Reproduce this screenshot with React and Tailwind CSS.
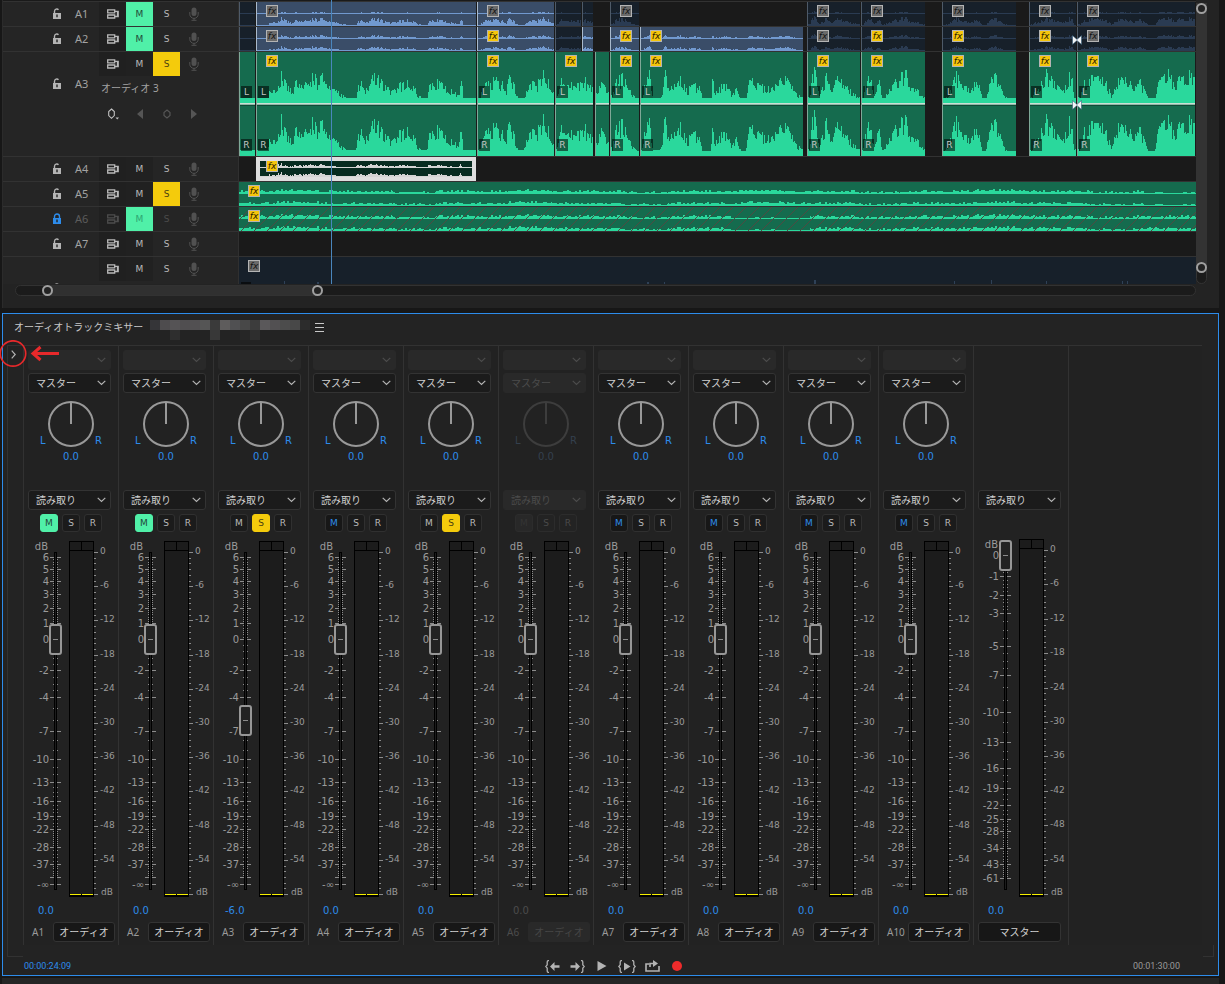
import React from "react";

/* ---------- waveform data ---------- */

const ENVELOPE = [
  [240, 5], [267, 5], [269, 16], [275, 15], [281, 32], [286, 18], [290, 14], [296, 22], [302, 15], [305, 28], [308, 18], [312, 34], [316, 20], [321, 33],
  [325, 20], [335, 12], [345, 5], [355, 5], [357, 23], [364, 14], [371, 28], [378, 26], [385, 14], [392, 14], [400, 19], [410, 23],
  [416, 10], [420, 5], [426, 5], [428, 18], [437, 22], [446, 15], [458, 8], [460, 24], [462, 5], [478, 5], [482, 18], [490, 24],
  [500, 21], [505, 10], [508, 28], [513, 18], [517, 5], [523, 5], [525, 12], [531, 24], [536, 20], [543, 32], [550, 20], [555, 5],
  [557, 8], [560, 24], [567, 22], [575, 18], [583, 24], [590, 16], [596, 12], [602, 24], [608, 12], [611, 6], [615, 24], [622, 26],
  [630, 11], [636, 4], [641, 5], [644, 20], [648, 30], [652, 5], [659, 5], [662, 14], [664, 33], [667, 15], [672, 22], [680, 26],
  [686, 14], [698, 19], [701, 4], [710, 4], [711, 34], [713, 12], [725, 20], [730, 8], [736, 14], [740, 4], [745, 4], [747, 24],
  [758, 19], [766, 14], [775, 21], [785, 24], [790, 16], [800, 6], [804, 4], [808, 6], [810, 22], [814, 42], [818, 8], [822, 18],
  [826, 28], [830, 10], [834, 26], [845, 18], [852, 10], [860, 4], [862, 5], [864, 22], [870, 30], [872, 8], [878, 20], [882, 4],
  [890, 15], [898, 29], [905, 29], [908, 16], [915, 14], [925, 4], [944, 4], [949, 12], [954, 31], [960, 18], [970, 13], [976, 24],
  [981, 4], [985, 4], [988, 22], [992, 30], [1000, 14], [1006, 4], [1029, 4], [1034, 12], [1045, 30], [1052, 22], [1062, 13],
  [1070, 32], [1073, 5], [1078, 6], [1083, 20], [1090, 25], [1105, 24], [1110, 5], [1115, 18], [1119, 33], [1130, 20], [1140, 21],
  [1147, 4], [1154, 4], [1157, 20], [1166, 33], [1172, 22], [1185, 29], [1400, 20],
];

function envelopeAt(x) {
  for (let i = 1; i < ENVELOPE.length; i += 1) {
    const [x1, y1] = ENVELOPE[i];
    if (x <= x1) {
      const [x0, y0] = ENVELOPE[i - 1];
      return y0 + ((y1 - y0) * Math.max(0, x - x0)) / (x1 - x0);
    }
  }
  return 5;
}

function noise(n) {
  const s = Math.sin(n * 127.1 + 11.7) * 43758.5453;
  return s - Math.floor(s);
}

function speechPath(start, width, base, scale, floor, max) {
  let d = "";
  for (let i = 0; i < width; i += 1) {
    const e = envelopeAt(start + i);
    const r = noise(Math.floor((start + i) / 2) + (i % 3 === 0 ? 500 : 0));
    const raw = e <= 6 ? e * scale : e * scale * (0.55 + 0.62 * r);
    const h = Math.min(max, Math.max(floor, Math.round(raw)));
    if (h > 0) d += `M${i} ${base}v${-h}h1v${h}z`;
  }
  return d;
}

function musicPath(width, base, quietFrom, quietTo, low) {
  let d = "";
  for (let i = 0; i < width; i += 1) {
    const quiet = i >= quietFrom && i <= quietTo;
    const swell = 3 + Math.round(Math.sin(i / 37) * 0.6);
    const h = quiet ? 1 + (noise(i >> 2) > 0.8 ? 1 : 0) : swell + Math.floor(noise((i >> 1) + low) * 2.3) - 1;
    d += `M${i} ${base}v${-h}h1v${h}z`;
  }
  return d;
}

/* ---------- clips ---------- */

const CLIPS_A1 = [
  { x: 239, w: 16, dim: true },
  { x: 256, w: 220, fx: "gray" },
  { x: 477, w: 77, fx: "gray" },
  { x: 555, w: 26, dim: true },
  { x: 582, w: 11, dim: true },
  { x: 610, w: 29, dim: true, fx: "gray" },
  { x: 807, w: 53, dim: true, fx: "gray" },
  { x: 861, w: 64, dim: true, fx: "gray" },
  { x: 942, w: 74, dim: true, fx: "gray" },
  { x: 1029, w: 47, dim: true, fx: "gray" },
  { x: 1077, w: 118, dim: true, fx: "gray" },
];

const CLIPS_A2 = [
  { x: 239, w: 16, dim: true },
  { x: 256, w: 220, fx: "gray" },
  { x: 477, w: 77, fx: "yellow" },
  { x: 555, w: 26, dim: true },
  { x: 582, w: 11 },
  { x: 610, w: 29, fx: "yellow" },
  { x: 640, w: 163, fx: "yellow" },
  { x: 807, w: 53, dim: true, fx: "gray" },
  { x: 861, w: 64, dim: true, fx: "yellow" },
  { x: 942, w: 74, dim: true, fx: "yellow" },
  { x: 1029, w: 47, dim: true, fx: "yellow" },
  { x: 1077, w: 118, dim: true, fx: "gray" },
];

const CLIPS_A3 = [
  { x: 239, w: 16, tag: true },
  { x: 256, w: 220, fx: "yellow", tag: true },
  { x: 477, w: 77, fx: "yellow", tag: true },
  { x: 555, w: 38, fx: "yellow", tag: true },
  { x: 595, w: 14 },
  { x: 610, w: 29, fx: "yellow", tag: true },
  { x: 640, w: 163, fx: "yellow", tag: true },
  { x: 807, w: 53, fx: "yellow", tag: true },
  { x: 861, w: 64, fx: "yellow", tag: true },
  { x: 942, w: 74, fx: "yellow", tag: true },
  { x: 1029, w: 47, fx: "yellow", tag: true },
  { x: 1077, w: 118, fx: "yellow", tag: true },
];

const LANE_ORIGIN = 239;

function FxBadge({ tone, className = "left-[9px] top-[3px]" }) {
  const color = tone === "yellow" ? "bg-[#f5c60c] text-[#2a2000]" : "bg-[#6a6a6a] text-[#141414]";
  return (
    <span className={`absolute z-10 flex h-3 w-3 items-center justify-center border border-[#b4b4b4] ${color} ${className}`}>
      <span className="font-['DejaVu_Sans'] text-[9px] leading-none italic">fx</span>
    </span>
  );
}

function ChannelTag({ children, className }) {
  return (
    <span className={`absolute left-px z-10 flex h-3 w-[11px] items-center justify-center bg-black/55 font-['DejaVu_Sans'] text-[9px] leading-none text-[#c4c4c4] ${className}`}>
      {children}
    </span>
  );
}

function Clip({ clip, className, children }) {
  return (
    <div
      className={`absolute top-0 h-full overflow-hidden ${className}`}
      style={{ left: clip.x - LANE_ORIGIN, width: clip.w }}
    >
      {children}
      {clip.fx && <FxBadge tone={clip.fx} />}
    </div>
  );
}

function SmallClip({ clip, upper, lower }) {
  const wave = clip.dim ? "#2a3b52" : "#7199cf";
  return (
    <Clip clip={clip} className={`border-l ${clip.dim ? "border-[#4e5a68] bg-[#17202a]" : "border-[#a9bacd] bg-[#3a4d68]"}`}>
      <svg width={clip.w} height="24" className="block" shapeRendering="crispEdges" aria-hidden="true">
        <path d={speechPath(clip.x, clip.w, 12, upper, 1, 6)} fill={wave} />
        <path d={speechPath(clip.x, clip.w, 24, lower, 1, 10)} fill={wave} />
      </svg>
    </Clip>
  );
}

function TallClip({ clip }) {
  return (
    <Clip clip={clip} className="border-l border-[#7fa897] bg-[#156b4e]">
      <svg width={clip.w} height="104" className="block" shapeRendering="crispEdges" aria-hidden="true">
        <path d={speechPath(clip.x, clip.w, 51, 1, 5, 46)} fill="#2ad89c" />
        <path d={speechPath(clip.x + 0.3, clip.w, 104, 1.25, 5, 46)} fill="#2ad89c" />
        <rect x="0" y="51" width={clip.w} height="1" fill="#c9dfd5" />
        <rect x="0" y="52" width={clip.w} height="1" fill="#8fb5a5" />
        <rect x="0" y="53" width={clip.w} height="1" fill="#0f4a37" />
      </svg>
      {clip.tag && <ChannelTag className="top-[34px]">L</ChannelTag>}
      {clip.tag && <ChannelTag className="top-[87px]">R</ChannelTag>}
    </Clip>
  );
}

function MusicLane({ locked }) {
  const hatch = [];
  for (let x = -24; x < 1600; x += 13) hatch.push(`M${x} 24L${x + 24} 0`);
  return (
    <div className="absolute inset-0 overflow-hidden bg-[#156b4e]">
      <svg width="1600" height="24" className="block" aria-hidden="true">
        <g shapeRendering="crispEdges" fill="#2ad89c">
          <path d={musicPath(1600, 12, locked ? 492 : 905, locked ? 570 : 1600, 3)} />
          <path d={musicPath(1600, 24, locked ? 492 : 905, locked ? 570 : 1600, 90)} />
        </g>
        {locked && <path d={hatch.join("")} stroke="#4f4a42" strokeWidth="1" fill="none" />}
      </svg>
      <FxBadge tone="yellow" />
    </div>
  );
}

function Bowtie({ className }) {
  return (
    <svg viewBox="0 0 10 10" className={`absolute z-20 h-[10px] w-[10px] ${className}`} aria-hidden="true">
      <path d="M0.5 0.500L5 4.500 9.500 0.500v9L5 5.500 0.500 9.500z" fill="#f2f4f6" stroke="#27506f" strokeWidth="0.5" />
    </svg>
  );
}

/* ---------- track header icons ---------- */

function LockIcon({ locked }) {
  return (
    <svg viewBox="0 0 10 12" className={`h-3 w-[10px] ${locked ? "text-[#2d8ceb]" : "text-[#b4b4b4]"}`} aria-hidden="true">
      <path d={locked ? "M2.5 6V3.5a2.5 2.5 0 0 1 5 0V6" : "M2.5 6V3.2a2.3 2.3 0 0 1 4-1.4"} fill="none" stroke="currentColor" strokeWidth="1.4" />
      <path d="M1 5h8v6H1z" fill="currentColor" />
      <path d="M4.3 6.6h1.4v2.6H4.3z" fill="#202020" />
    </svg>
  );
}

function TargetIcon() {
  return (
    <svg viewBox="0 0 12 10" className="h-[10px] w-3" fill="none" stroke="currentColor" strokeWidth="1.3" aria-hidden="true">
      <path d="M0.7 0.8h7v3h-7zM0.7 6h7v3h-7z" />
      <path d="M7.7 2.3h3.5v5.2H7.7M10.5 2.5v5" />
    </svg>
  );
}

function MicIcon() {
  return (
    <svg viewBox="0 0 10 14" className="h-[14px] w-[10px] text-[#515151]" aria-hidden="true">
      <rect x="2.5" y="0.5" width="5" height="8.5" rx="2.5" fill="currentColor" />
      <path d="M0.8 5v2.2a4.2 4.2 0 0 0 8.4 0V5M5 11.2v2M2.5 13.3h5" fill="none" stroke="currentColor" />
    </svg>
  );
}

function TrackButtons({ name, mute, solo, locked }) {
  const idle = locked ? "text-[#4c4c4c]" : "text-[#b9b9b9]";
  return (
    <div className="flex h-6 font-['DejaVu_Sans'] text-[9px] leading-none">
      <button aria-label={`${name} source`} className={`flex w-[27px] items-center justify-center bg-[#202020] ${idle}`}>
        <TargetIcon />
      </button>
      <button
        aria-pressed={mute}
        className={`w-[27px] ${mute ? `bg-[#50f0a8] ${locked ? "text-[#2ea673]" : "text-[#23493a]"}` : `bg-[#212121] ${idle}`}`}
      >
        M
      </button>
      <button
        aria-pressed={solo}
        className={`w-[27px] ${solo ? "bg-[#f4cb0c] text-[#4a4010]" : `bg-[#252525] ${idle}`}`}
      >
        S
      </button>
      <button aria-label={`${name} voice-over`} className="flex w-[27px] items-center justify-center">
        <MicIcon />
      </button>
    </div>
  );
}

function TrackRow({ name, mute = false, solo = false, locked = false, size = "h-[25px]", tall, peek, children }) {
  return (
    <div className={`flex shrink-0 ${size} ${peek ? "" : "border-b border-[#323232]"}`}>
      <div className="flex w-[236px] shrink-0 overflow-hidden border-r border-[#303030] bg-[#252525]">
        <div className={`flex w-24 items-start justify-end ${tall ? "pt-5" : ""}`}>
          <button aria-label={`lock ${name}`} className={`mr-[13px] flex h-6 items-center ${peek ? "mt-5" : ""}`}>
            <LockIcon locked={locked} />
          </button>
          <span className={`flex h-6 w-6 items-center pb-px text-[11px] ${locked ? "text-[#5c5c5c]" : "text-[#a2a2a2]"}`}>{peek ? "" : name}</span>
        </div>
        <div>
          <TrackButtons name={name} mute={mute} solo={solo} locked={locked} />
          {tall && (
            <>
              <p className="flex h-6 items-center pl-[2px] text-[10px] text-[#a2a2a2]">オーディオ 3</p>
              <div className="flex h-7 items-center text-[#555555]">
                <button aria-label="keyframe display" className="flex w-[27px] justify-center text-[#c0c0c0]">
                  <svg viewBox="0 0 12 12" className="h-3 w-3" aria-hidden="true">
                    <path d="M4.5 1L7.3 3.6v4L4.5 10.3 1.7 7.600V3.600z" fill="none" stroke="currentColor" strokeWidth="1.1" />
                    <path d="M8.500 9.500h3.500l-1.750 2z" fill="currentColor" />
                  </svg>
                </button>
                <button aria-label="previous keyframe" className="flex w-[27px] justify-center">
                  <svg viewBox="0 0 8 10" className="h-[10px] w-2" aria-hidden="true"><path d="M7 0v10L1 5z" fill="currentColor" /></svg>
                </button>
                <button aria-label="add keyframe" className="flex w-[27px] justify-center">
                  <svg viewBox="0 0 8 10" className="h-[10px] w-2" aria-hidden="true"><path d="M4 1l3 2.500v3L4 9 1 6.500v-3z" fill="none" stroke="currentColor" strokeWidth="1.200" /></svg>
                </button>
                <button aria-label="next keyframe" className="flex w-[27px] justify-center">
                  <svg viewBox="0 0 8 10" className="h-[10px] w-2" aria-hidden="true"><path d="M1 0v10l6-5z" fill="currentColor" /></svg>
                </button>
              </div>
            </>
          )}
        </div>
      </div>
      <div className="relative min-w-0 flex-1 overflow-hidden bg-[#1a1a1a]">{children}</div>
    </div>
  );
}

function ZoomHandle({ className }) {
  return <button aria-label="zoom handle" className={`absolute h-[11px] w-[11px] rounded-full border-2 border-[#a0a0a0] bg-[#232323] ${className}`} />;
}

function Timeline() {
  const a4 = { x: 256, w: 220 };
  return (
    <section className="mx-[2px] mr-[6px] flex h-[308px] flex-col border-l border-[#2b2b2b] bg-[#232323]">
      <div className="relative flex h-[284px] overflow-hidden">
        <div className="flex min-w-0 flex-1 flex-col overflow-hidden">
          <div className="h-[2px] shrink-0 border-b border-[#323232] bg-[#1a1a1a]" />
          <TrackRow name="A1" mute>
            {CLIPS_A1.map((c) => <SmallClip key={c.x} clip={c} upper={0.07} lower={0.28} />)}
          </TrackRow>
          <TrackRow name="A2" mute>
            {CLIPS_A2.map((c) => <SmallClip key={c.x} clip={c} upper={0.13} lower={0.15} />)}
          </TrackRow>
          <TrackRow name="A3" solo tall size="h-[105px]">
            {CLIPS_A3.map((c) => <TallClip key={c.x} clip={c} />)}
          </TrackRow>
          <TrackRow name="A4">
            <div
              className="absolute top-0 h-6 overflow-hidden border-4 border-[#dedede] bg-[#072b20]"
              style={{ left: a4.x - LANE_ORIGIN, width: a4.w }}
            >
              <svg width="212" height="16" className="block" shapeRendering="crispEdges" aria-hidden="true">
                <path d={speechPath(a4.x + 4, 212, 7, 0.14, 1, 5)} fill="#d4d4d4" />
                <path d={speechPath(a4.x + 4, 212, 16, 0.14, 1, 5)} fill="#d4d4d4" />
              </svg>
              <FxBadge tone="yellow" className="-top-px left-[6px]" />
            </div>
          </TrackRow>
          <TrackRow name="A5" solo><MusicLane /></TrackRow>
          <TrackRow name="A6" mute locked><MusicLane locked /></TrackRow>
          <TrackRow name="A7" />
          <TrackRow name="A8" peek size="h-7">
            <div className="absolute inset-0 bg-[#17202a]">
              <FxBadge tone="gray" />
              <svg width="960" height="27" className="block" shapeRendering="crispEdges" aria-hidden="true">
                <path d="M45 24h1v3h-1zM78 25h2v2h-2zM408 25h2v2h-2zM425 25h1v2h-1zM575 23h2v4h-2zM715 24h1v3h-1zM752 23h1v4h-1zM807 24h1v3h-1zM883 24h1v3h-1zM888 24h1v3h-1z" fill="#2f4157" />
                <path d="M2 25h10v2h-10z" fill="#0a0d10" />
              </svg>
            </div>
          </TrackRow>
          <Bowtie className="left-[1069px] top-[35px]" />
          <Bowtie className="left-[1069px] top-[100px]" />
          <div className="absolute left-[328px] top-0 z-20 h-full w-px bg-[#4a86bd]" />
        </div>
        <div className="relative mr-3 w-[11px] shrink-0">
          <div className="absolute inset-x-0 top-[3px] bottom-0 rounded-full border border-[#343434] bg-[#1b1b1b]" />
          <div className="absolute inset-x-0 top-[3px] h-[264px] bg-[#333333]" />
          <ZoomHandle className="left-0 top-[3px]" />
          <ZoomHandle className="left-0 top-[262px]" />
        </div>
      </div>
      <div className="relative mt-px mr-[23px] ml-3 h-[11px] rounded-full border border-[#323232] bg-[#1b1b1b]">
        <div className="absolute left-8 h-[9px] w-[271px] bg-[#303030]" />
        <ZoomHandle className="-top-px left-[26px]" />
        <ZoomHandle className="-top-px left-[296px]" />
      </div>
    </section>
  );
}

/* ---------- mixer ---------- */

const CHANNEL_SCALE = [
  ["6", 557, 4], ["5", 569, 5], ["4", 581, 5], ["3", 594, 6], ["2", 608, 6], ["1", 623, 6], ["0", 639, 4], ["-2", 670, 3], ["-4", 697, 2],
  ["-7", 731, 2], ["-10", 759, 2], ["-13", 782, 3], ["-16", 801, 3], ["-19", 816, 3], ["-22", 829, 8], ["-28", 847, 4], ["-37", 864, 5],
  ["", 877, 0], ["-∞", 884, 0],
];

const MASTER_SCALE = [
  ["0", 555, 4], ["-1", 576, 4], ["-2", 595, 4], ["-3", 613, 3], ["-5", 646, 3], ["-7", 675, 2], ["-10", 712, 2], ["-13", 742, 2],
  ["-16", 768, 2], ["-19", 788, 2], ["-22", 805, 2], ["-25", 819, 4], ["-28", 831, 7], ["-34", 848, 5], ["-43", 864, 6], ["-61", 878, 0],
];

const METER_LABELS = ["0", "-6", "-12", "-18", "-24", "-30", "-36", "-42", "-48", "-54"];

const FADER_TOP = 537;

function FaderScale({ scale, master }) {
  const top = master ? 539 : 541;
  const zero = master ? 550 : 552;
  const step = (894 - zero) / 10;
  const y = (v) => v - FADER_TOP;
  let ticks = "";
  scale.forEach(([, at, dots], i) => {
    ticks += `M26 ${y(at)}h4v1h-4zM33 ${y(at)}h4v1h-4z`;
    for (let k = 1; k <= dots; k += 1) {
      const t = y(Math.round(at + ((scale[i + 1][1] - at) * k) / (dots + 1)));
      ticks += `M29 ${t}h1v1h-1zM33 ${t}h1v1h-1z`;
    }
  });
  for (let k = 0; k <= 60; k += 1) {
    ticks += `M70 ${y(Math.round(zero + (k * step) / 6))}h${k % 6 === 0 ? 4 : 2}v1h${k % 6 === 0 ? -4 : -2}z`;
  }
  return (
    <svg width="94" height="366" className="block font-['DejaVu_Sans']" aria-hidden="true">
      <g shapeRendering="crispEdges">
        <path d={ticks} fill="#8c8c8c" />
        <path d={`M30 ${y(552)}h3v338h-3z`} fill="#000000" />
        <path d={`M31 ${y(553)}h1v336h-1z`} fill="#1c1c1c" />
        <path d={`M45 ${y(top)}h25V${y(897)}H45z`} fill="#000000" />
        <path d={`M46 ${y(top) + 1}h11v8h-11zM58 ${y(top) + 1}h11v8h-11zM46 ${y(top) + 10}h23V${y(894)}h-23z`} fill="#1c1c1c" />
        <path d={`M46 ${y(894)}h11v1h-11zM58 ${y(894)}h11v1h-11z`} fill="#f6f000" />
      </g>
      <g fill="#9a9a9a" fontSize="10" textAnchor="end">
        <text x="24" y={master ? 11 : 13}>dB</text>
        {scale.map(([label, at]) => label && <text key={label} x="25" y={y(at) + 4}>{label}</text>)}
      </g>
      <g fill="#9a9a9a" fontSize="9">
        {METER_LABELS.map((label, i) => (
          <text key={label} x="76" y={y(Math.round(zero + i * step)) + 2}>{label}</text>
        ))}
        <text x="77" y={y(895)}>dB</text>
      </g>
    </svg>
  );
}

function Fader({ name, scale, travel, master }) {
  return (
    <div className="relative h-[366px]">
      <FaderScale scale={scale} master={master} />
      <input
        type="range"
        aria-label={`${name} volume`}
        min="0"
        max="337"
        defaultValue={337 - travel}
        className="absolute top-0 left-[25px] h-[368px] w-[13px] appearance-none bg-transparent [direction:rtl] [writing-mode:vertical-lr] [&::-webkit-slider-thumb]:h-[31px] [&::-webkit-slider-thumb]:w-[13px] [&::-webkit-slider-thumb]:appearance-none [&::-webkit-slider-thumb]:rounded-[3px] [&::-webkit-slider-thumb]:border-2 [&::-webkit-slider-thumb]:border-[#979797] [&::-webkit-slider-thumb]:bg-[#232323] [&::-webkit-slider-thumb]:bg-[linear-gradient(#8a8a8a,#8a8a8a)] [&::-webkit-slider-thumb]:bg-[length:5px_1px] [&::-webkit-slider-thumb]:bg-center [&::-webkit-slider-thumb]:bg-no-repeat"
      />
    </div>
  );
}

function Dropdown({ label, value, dim }) {
  return (
    <div className="relative h-5 w-[83px]">
      <select
        aria-label={label}
        disabled={dim}
        className={`block h-full w-full appearance-none rounded-[3px] border pl-[7px] text-[10px] opacity-100 ${dim ? "border-[#292929] bg-[#292929] text-[#4c4c4c]" : "border-[#333333] bg-[#1b1b1b] text-[#d0d0d0]"}`}
      >
        {value && <option>{value}</option>}
      </select>
      <svg viewBox="0 0 9 6" className={`pointer-events-none absolute top-[7px] right-[5px] h-[6px] w-[9px] ${dim ? "text-[#4c4c4c]" : "text-[#b4b4b4]"}`} aria-hidden="true">
        <path d="M0.7 0.900L4.500 4.500 8.300 0.900" fill="none" stroke="currentColor" strokeWidth="1.200" />
      </svg>
    </div>
  );
}

function PanKnob({ name, dim }) {
  return (
    <div className={`relative mx-auto flex w-[62px] flex-col items-center font-['DejaVu_Sans'] text-[10px] ${dim ? "text-[#34404e]" : "text-[#2d8ceb]"}`}>
      <svg viewBox="0 0 48 48" className={`h-12 w-12 ${dim ? "text-[#3d3d3d]" : "text-[#999999]"}`} fill="none" stroke="currentColor" aria-hidden="true">
        <circle cx="24" cy="24" r="22" strokeWidth="2" />
        <path d="M24 2v22" strokeWidth="2" />
      </svg>
      <span className="absolute top-[34px] left-0 leading-[14px]">L</span>
      <span className="absolute top-[34px] right-0 leading-[14px]">R</span>
      <output className="mt-[2px] leading-[14px]">0.0</output>
      <input type="range" min="-100" max="100" defaultValue="0" aria-label={`${name} pan`} className="absolute inset-x-2 top-0 h-12 opacity-0" />
    </div>
  );
}

function MixButton({ children, state }) {
  const tones = {
    on: "border-[#50f0a8] bg-[#50f0a8] text-[#23493a]",
    solo: "border-[#f4cb0c] bg-[#f4cb0c] text-[#4a4010]",
    blue: "border-[#303030] bg-[#171717] text-[#2d8ceb]",
    idle: "border-[#303030] bg-[#1b1b1b] text-[#b9b9b9]",
    dim: "border-[#2c2c2c] bg-[#232323] text-[#4a4a4a]",
    faint: "border-[#2c2c2c] bg-[#282828] text-[#343434]",
  };
  return (
    <button className={`flex h-[18px] w-[18px] items-center justify-center rounded-[3px] border font-['DejaVu_Sans'] text-[9px] leading-none ${tones[state]}`}>
      {children}
    </button>
  );
}

const CHANNELS = [
  { name: "A1", m: "on", s: "idle" },
  { name: "A2", m: "on", s: "idle" },
  { name: "A3", m: "idle", s: "solo", value: "-6.0", travel: 168 },
  { name: "A4", m: "blue", s: "idle" },
  { name: "A5", m: "idle", s: "solo" },
  { name: "A6", m: "faint", s: "dim", dim: true },
  { name: "A7", m: "blue", s: "idle" },
  { name: "A8", m: "blue", s: "idle" },
  { name: "A9", m: "blue", s: "idle" },
  { name: "A10", m: "blue", s: "idle" },
];

function ValueReadout({ value, dim }) {
  return (
    <output className={`block h-4 font-['DejaVu_Sans'] text-[10px] leading-4 ${value.startsWith("-") ? "pl-[11px]" : "pl-[14px]"} ${dim ? "text-[#4c4c4c]" : "text-[#2d8ceb]"}`}>
      {value}
    </output>
  );
}

function Channel({ channel }) {
  const { name, m, s, dim, value = "0.0", travel = 87 } = channel;
  return (
    <div className="w-[95px] shrink-0 border-l border-[#323232] pt-1">
      <div className="flex flex-col gap-[3px] pl-1">
        <Dropdown label={`${name} input`} value="" dim />
        <Dropdown label={`${name} output`} value="マスター" dim={dim} />
      </div>
      <div className="mt-[7px] h-[90px]">
        <PanKnob name={name} dim={dim} />
      </div>
      <div className="pl-1">
        <Dropdown label={`${name} automation`} value="読み取り" dim={dim} />
      </div>
      <div className="mt-1 flex justify-center gap-1">
        <MixButton state={m}>M</MixButton>
        <MixButton state={s}>S</MixButton>
        <MixButton state={dim ? "dim" : "idle"}>R</MixButton>
      </div>
      <div className="mt-[5px]">
        <Fader name={name} scale={CHANNEL_SCALE} travel={travel} />
      </div>
      <ValueReadout value={value} dim={dim} />
      <div className="mt-[3px] flex items-center justify-between pr-[3px] pl-2">
        <span className={`text-[10px] ${dim ? "text-[#4c4c4c]" : "text-[#9a9a9a]"}`}>{name}</span>
        <button
          disabled={dim}
          className={`h-5 w-[62px] shrink-0 rounded-[3px] border text-[10px] leading-none ${dim ? "border-[#292929] bg-[#292929] text-[#464646]" : "border-[#333333] bg-[#171717] text-[#d0d0d0]"}`}
        >
          オーディオ
        </button>
      </div>
    </div>
  );
}

function MasterChannel() {
  return (
    <div className="w-[96px] shrink-0 border-x border-[#323232] pt-[144px]">
      <div className="pl-1">
        <Dropdown label="Master automation" value="読み取り" />
      </div>
      <div className="mt-[27px]">
        <Fader name="Master" scale={MASTER_SCALE} travel={3} master />
      </div>
      <ValueReadout value="0.0" />
      <div className="mt-[3px] flex pl-1">
        <button className="h-5 w-[83px] rounded-[3px] border border-[#333333] bg-[#171717] text-[10px] leading-none text-[#d0d0d0]">マスター</button>
      </div>
    </div>
  );
}

function TransportButton({ label, children }) {
  return (
    <button aria-label={label} className="flex h-4 w-[25px] items-center justify-center text-[#b4b4b4]">
      {children}
    </button>
  );
}

function Transport() {
  return (
    <div className="flex items-center pl-2">
      <TransportButton label="go to in point">
        <svg viewBox="0 0 15 13" className="h-[13px] w-[15px]" aria-hidden="true">
          <path d="M4 0.700H3.200Q2.200 0.700 2.200 2v2.800L0.800 6.500l1.400 1.700V11q0 1.300 1 1.300H4" fill="none" stroke="currentColor" strokeWidth="1.300" />
          <path d="M5 6.500L9.500 2v3.300H14.500v2.400H9.500V11z" fill="currentColor" />
        </svg>
      </TransportButton>
      <TransportButton label="go to out point">
        <svg viewBox="0 0 15 13" className="h-[13px] w-[15px]" aria-hidden="true">
          <path d="M11 0.700h0.800q1 0 1 1.300v2.800l1.400 1.700-1.400 1.700V11q0 1.300-1 1.300H11" fill="none" stroke="currentColor" strokeWidth="1.300" />
          <path d="M10 6.500L5.500 2v3.300H0.500v2.400H5.500V11z" fill="currentColor" />
        </svg>
      </TransportButton>
      <TransportButton label="play">
        <svg viewBox="0 0 10 10" className="h-[10px] w-[10px]" aria-hidden="true"><path d="M0.500 0v10L9.500 5z" fill="currentColor" /></svg>
      </TransportButton>
      <TransportButton label="play in to out">
        <svg viewBox="0 0 18 13" className="h-[13px] w-[18px]" aria-hidden="true">
          <path d="M4 0.700H3.200Q2.200 0.700 2.200 2v2.800L0.800 6.500l1.400 1.700V11q0 1.300 1 1.300H4M14 0.700h0.800q1 0 1 1.300v2.800l1.400 1.700-1.400 1.700V11q0 1.300-1 1.300H14" fill="none" stroke="currentColor" strokeWidth="1.300" />
          <path d="M6 2.500v8l6.500-4z" fill="currentColor" />
        </svg>
      </TransportButton>
      <TransportButton label="loop">
        <svg viewBox="0 0 15 12" className="h-3 w-[15px]" aria-hidden="true">
          <path d="M4 4H1v7h13V6M5 7V3.500h4" fill="none" stroke="currentColor" strokeWidth="1.600" />
          <path d="M8 0v7l5-3.500z" fill="currentColor" />
        </svg>
      </TransportButton>
      <TransportButton label="record">
        <span className="h-[10px] w-[10px] rounded-full bg-[#ee2b2b]" />
      </TransportButton>
    </div>
  );
}

const MOSAIC_TOP = ["bg-[#353538]", "bg-[#4e4c4e]", "bg-[#555355]", "bg-[#504e50]", "bg-[#525052]", "bg-[#555555]", "bg-[#3a3a3a]", "bg-[#5e5c5c]", "bg-[#505052]", "bg-[#484848]", "bg-[#3c3c3c]", "bg-[#5a585a]", "bg-[#525052]", "bg-[#4c4c4c]", "bg-[#484848]", "bg-[#2c2c2c]"];
const MOSAIC_BOTTOM = ["", "", "bg-[#2e2e2e]", "", "", "", "bg-[#383838]", "", "", "bg-[#262626]", "bg-[#2e2e2e]", "", "", "", "", ""];

function Mosaic() {
  return (
    <div className="ml-1 grid w-40 grid-cols-16 self-end pb-[5px]" aria-hidden="true">
      {[...MOSAIC_TOP, ...MOSAIC_BOTTOM].map((tone, i) => (
        <span key={i} className={`h-[10px] w-[10px] ${tone}`} />
      ))}
    </div>
  );
}

function Annotation() {
  return (
    <svg viewBox="0 0 62 28" className="pointer-events-none absolute top-[26px] -left-[3px] z-30 h-7 w-[62px]" fill="none" stroke="#e8292b" aria-hidden="true">
      <circle cx="13" cy="13.500" r="12.700" strokeWidth="1.700" />
      <path d="M33 13.500H59" strokeWidth="3" />
      <path d="M40.500 7l-7.500 6.500 7.500 6.500" strokeWidth="3" />
    </svg>
  );
}

function Mixer() {
  return (
    <section className="relative mr-[6px] ml-[2px] border border-[#2d8ceb] bg-[#232323]">
      <header className="flex h-[31px] items-center pl-[11px]">
        <h1 className="mt-[-5px] w-[132px] shrink-0 text-[10px] whitespace-nowrap text-[#c8c8c8]">オーディオトラックミキサー</h1>
        <Mosaic />
        <button aria-label="panel menu" className="mt-[-5px] ml-[5px] flex flex-col gap-[2px]">
          <span className="h-px w-[9px] bg-[#c8c8c8]" />
          <span className="mt-px h-px w-[9px] bg-[#c8c8c8]" />
          <span className="mt-px h-px w-[9px] bg-[#c8c8c8]" />
        </button>
      </header>
      <div className="mr-4 ml-1 flex border-t border-[#323232]">
        <div className="flex w-4 shrink-0 items-start border-l border-[#323232]">
          <button aria-label="show effects and sends" className="flex h-4 w-full items-center justify-center pr-[5px]">
            <svg viewBox="0 0 5 9" className="h-[9px] w-[5px]" aria-hidden="true">
              <path d="M0.700 0.700L4.200 4.500 0.700 8.300" fill="none" stroke="#b4b4b4" strokeWidth="1.200" />
            </svg>
          </button>
        </div>
        <div className="flex h-[599px] min-w-0 flex-1 overflow-hidden bg-[#222222]">
          {CHANNELS.map((c) => <Channel key={c.name} channel={c} />)}
          <MasterChannel />
        </div>
      </div>
      <div className="mr-1 ml-1 flex h-3 justify-between">
        <span className="w-4 border-b border-l border-[#323232]" />
        <span className="w-[11px] border-r border-b border-[#323232]" />
      </div>
      <footer className="grid h-[18px] grid-cols-[1fr_auto_1fr] items-center font-['Roboto'] text-[9px]">
        <output className="pl-[21px] text-[#2d8ceb]">00:00:24:09</output>
        <Transport />
        <output className="pr-[38px] text-right text-[#9a9a9a]">00:01:30:00</output>
      </footer>
      <Annotation />
    </section>
  );
}

export default function App() {
  return (
    <main className="flex min-h-screen flex-col overflow-hidden bg-[#171717] font-['Noto_Sans','Noto_Sans_CJK_JP',sans-serif] leading-none">
      <Timeline />
      <div className="h-[5px] shrink-0" />
      <Mixer />
      <div className="mt-[2px] mr-[6px] ml-[2px] flex-1 bg-[#252525]" />
    </main>
  );
}
